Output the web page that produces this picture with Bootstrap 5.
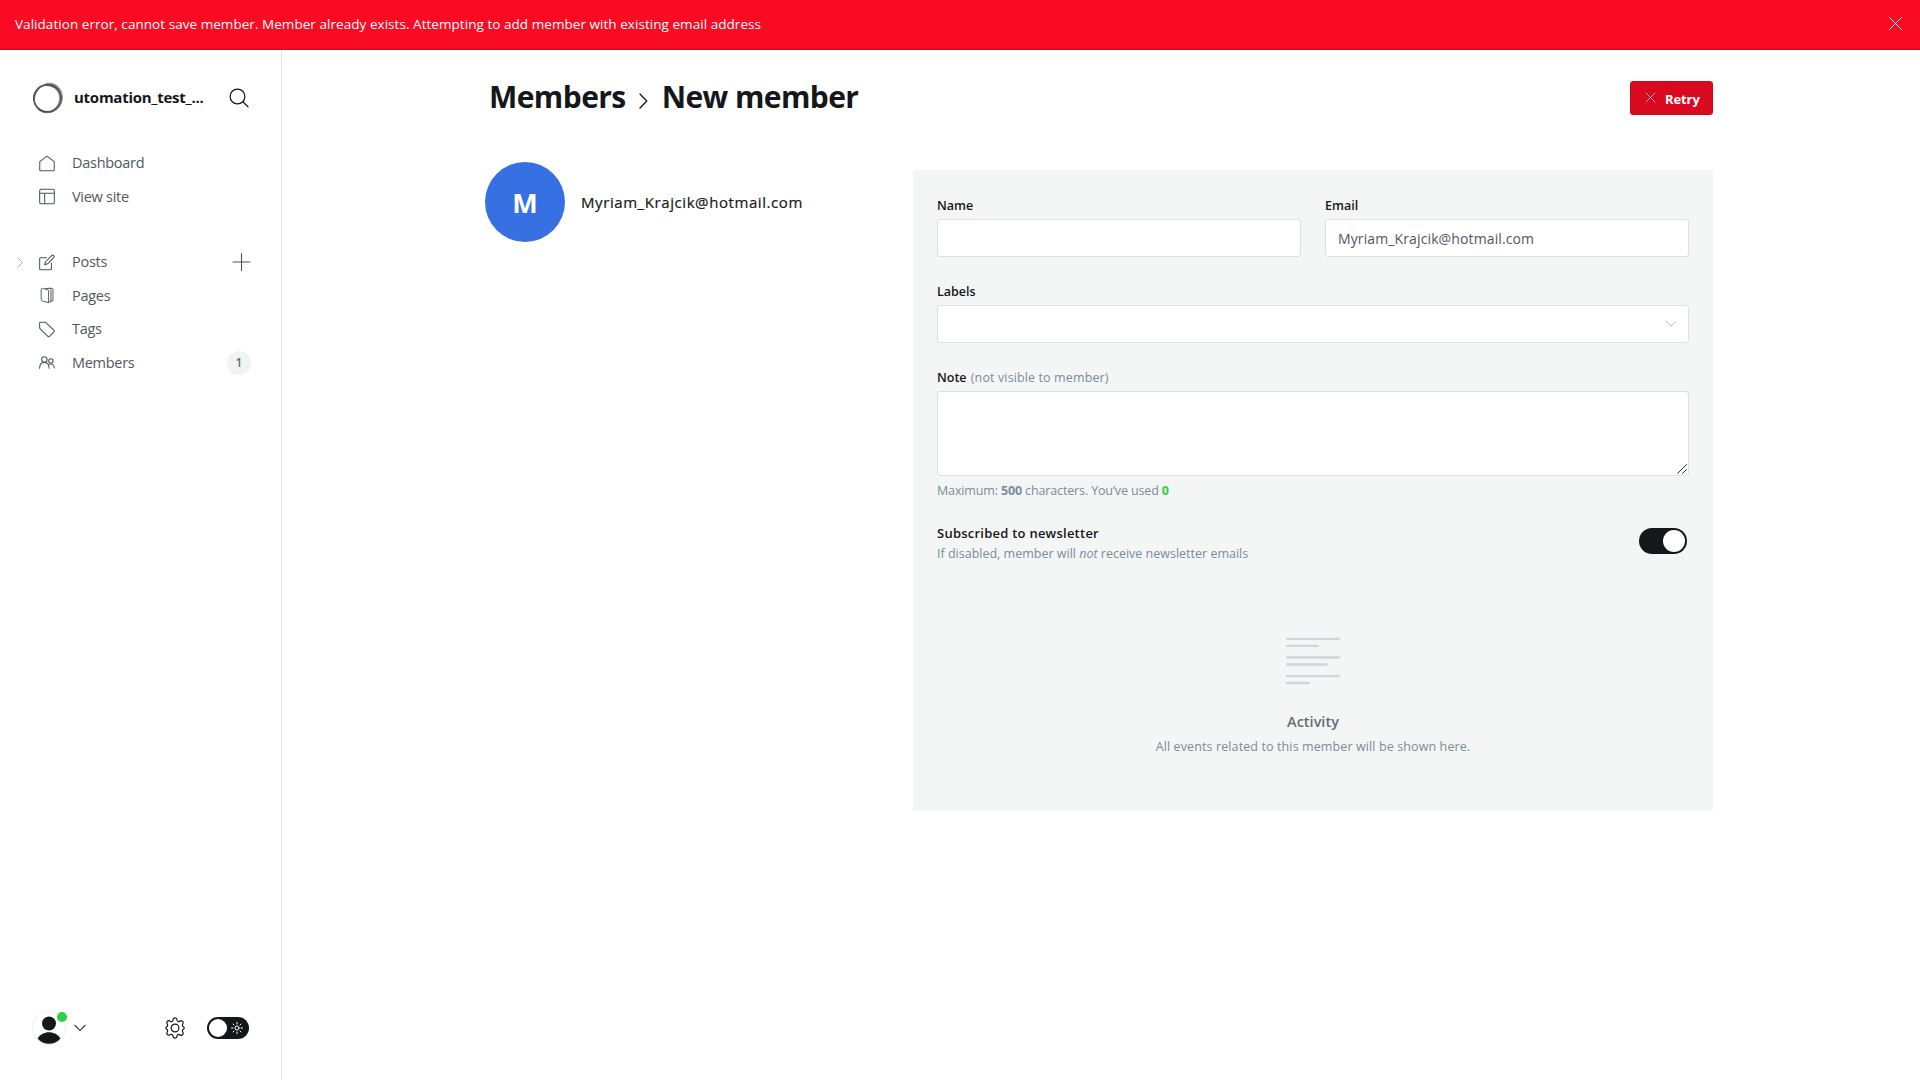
<!DOCTYPE html>
<html lang="en">
<head>
<meta charset="utf-8">
<title>New member</title>
<link href="https://cdn.jsdelivr.net/npm/bootstrap@5.3.0/dist/css/bootstrap.min.css" rel="stylesheet">
<style>
body{font-family:"Open Sans","Noto Sans",sans-serif;color:#15171a;height:1080px;overflow:hidden;font-size:14px;line-height:20px;background:#fff}
svg{display:block;fill:none;stroke:currentColor;stroke-linecap:round;stroke-linejoin:round;flex:none}
.alert-strip{height:50px;background:#f80b23;border-bottom:1px solid #c50a1e;color:#fff;padding:0 17px 2px 15px;font-weight:500;font-size:13.5px;letter-spacing:.048px}
.side{width:282px;border-right:1px solid #dfe1e3;padding:28px 0 30px}
.site-row{height:40px;padding:0 32px 0 32px}
.site-name{font-weight:700;font-size:15px;margin-left:10px;letter-spacing:-.26px;margin-top:-2px}
.nav-top{margin-top:28.5px}
.nav-second{margin-top:32px}
.menu-row{height:33.5px;padding:0 30px 0 39px;color:#4b5359;font-size:14.5px;position:relative}
.menu-row .lbl{margin-left:17px;letter-spacing:-.28px;color:#505960}
.caret{position:absolute;left:16px;top:11px;color:#abb4be}
.count{width:24px;height:24px;border-radius:50%;background:#f1f3f4;font-size:12px;font-weight:600;color:#626d79}
.foot{height:44px;padding:0 32px 0 32px}
.avatar-sm{position:relative;width:34px;height:34px}
.dot{position:absolute;left:25px;top:1px;width:10px;height:10px;border-radius:50%;background:#30cf43}
.mode{width:42px;height:22px;border-radius:11px;background:#15171a;padding:0 6px 0 2px;margin-left:21px;color:#fff}
.mode i{width:18px;height:18px;border-radius:50%;background:#fff}
.foot-chev{margin-left:8px}
.main-area{padding:31px 207px 0 203px}
.head-row{height:34px}
.head-row h1{font-size:30px;font-weight:700;line-height:34px;margin:0 0 2px;letter-spacing:-.58px}
.head-row h1.first{margin-left:4px}
.crumb{margin:5px 14px 0 13px}
.btn.retry{width:83px;height:34px;border-radius:3px;background:#d90a20;border:1px solid #c50a1e;color:#fff;font-size:13px;font-weight:700;padding:0;letter-spacing:-.1px}
.retry svg{margin:0 9px 1px 14px}
.retry span{margin-top:3px}
.content-row{margin-top:47px}
.big-avatar{width:80px;height:80px;border-radius:50%;background:#3770e2;color:#fff;font-size:27px;font-weight:700;padding-top:1px}
.who{font-size:15px;font-weight:500;margin-left:16px;letter-spacing:.58px;-webkit-text-stroke:.2px currentColor;padding-bottom:1px}
.panel{width:800px;height:641px;background:#f4f6f6;padding:25px 24px 0;margin-top:8px}
.cap{font-size:12.5px;font-weight:600;line-height:20px;display:block;padding-top:1px;margin-bottom:3px;color:#15171a}
.muted{color:#7c8b9a;font-weight:400}
.vis{letter-spacing:.12px;margin-left:1px}
.form-control.fld{height:38px;border:1px solid #dce0e3;border-radius:3px;padding:0 12px;font-size:14px;color:#4f575e;background:#fff;letter-spacing:.12px}
textarea.form-control.fld{height:85px;resize:none}
.note-box{position:relative}
.grip{position:absolute;right:2px;bottom:2px}
.grp{margin-bottom:24px}
.hint{font-size:12.5px;line-height:18px}
.limit{margin-top:6px;letter-spacing:-.14px}
.used{color:#30cf43}
.news{margin-top:22px}
.news-title{font-size:13px;font-weight:600;line-height:20px;letter-spacing:.24px;margin:1px 0 2px}
.toggle{width:48px;height:26px;border-radius:13px;background:#15171a;padding:2px;margin:0 2px 4px 0}
.toggle i{width:22px;height:22px;border-radius:50%;background:#fff}
.events{margin-top:74px}
.bars{color:#d0d5d9}
.ev-title{margin-top:26px;font-size:14.5px;font-weight:600;color:#626d79}
.ev-text{margin-top:6px;letter-spacing:.11px}
.chev{color:#b4bcc4}
</style>
<script src="https://cdn.jsdelivr.net/npm/bootstrap@5.3.0/dist/js/bootstrap.bundle.min.js"></script>
</head>
<body class="d-flex flex-column">
<div class="alert-strip d-flex align-items-center justify-content-between flex-shrink-0">
  <span>Validation error, cannot save member. Member already exists. Attempting to add member with existing email address</span>
  <svg width="15" height="15" viewBox="0 0 15 15" stroke-width=".9"><path d="M1.500 1.500l12 12M13.500 1.500l-12 12"/></svg>
</div>
<div class="d-flex flex-grow-1">
  <nav class="side d-flex flex-column flex-shrink-0">
    <div class="site-row d-flex align-items-center">
      <svg width="32" height="32" viewBox="0 0 32 32"><path d="M14 1.500C22-.5 30 5 30.500 15 30.500 23 25 30 17 30.500 24 27 28 22 27.500 15 27 8 21 3.500 14 3.500z" fill="#b0b0b0" stroke="#777" stroke-width=".7"/><ellipse cx="15.400" cy="16.300" rx="13.600" ry="13.500" stroke="#4a4a4a" stroke-width="1.700"/><ellipse cx="16" cy="16.500" rx="13" ry="14.600" stroke="#666" stroke-width=".9" transform="rotate(25 16 16)"/></svg>
      <span class="site-name">utomation_test_...</span>
      <svg class="ms-auto" width="20" height="20" viewBox="0 0 20 20" stroke-width="1.250"><circle cx="8.500" cy="8.500" r="7.400"/><path d="M13.800 13.800l5.200 5"/></svg>
    </div>
    <div class="menu-row nav-top d-flex align-items-center">
      <svg width="16" height="17" viewBox="0 0 17 17" stroke-width="1.100"><path d="M.8 6.600L8.500.6l7.700 6v8.700a1 1 0 0 1-1 1H1.800a1 1 0 0 1-1-1z"/></svg><span class="lbl">Dashboard</span>
    </div>
    <div class="menu-row d-flex align-items-center">
      <svg width="16" height="17" viewBox="0 0 17 17" stroke-width="1.100"><rect x=".7" y=".7" width="15.600" height="15.600" rx="1.800"/><path d="M.7 5h15.600M6 5v11"/></svg><span class="lbl">View site</span>
    </div>
    <div class="menu-row nav-second d-flex align-items-center">
      <svg class="caret" width="8" height="11" viewBox="0 0 8 11"><path d="M2 1l4.500 4.500L2 10"/></svg>
      <svg width="16" height="17" viewBox="0 0 17 17" stroke-width="1.100"><path d="M8 3.500H1.700a1 1 0 0 0-1 1v10.800a1 1 0 0 0 1 1h10.500a1 1 0 0 0 1-1V9M6 11l1-3.300L13.700 1c1.200-1 3.200.7 2.100 2.100L9.200 9.900z"/></svg><span class="lbl">Posts</span>
      <svg class="ms-auto plus" width="20" height="20" viewBox="0 0 20 20" stroke-width="1.100"><path d="M10.500 1.500v17M2 10h17"/></svg>
    </div>
    <div class="menu-row d-flex align-items-center">
      <svg width="16" height="17" viewBox="0 0 17 17" stroke-width="1"><path d="M2.300 1.800a1 1 0 0 1 1.200-.9l5.800 1.500a1.200 1.200 0 0 1 .9 1.200v12.500l-6.400-1.700a2 2 0 0 1-1.500-1.900zM7 1h4l1.200.6a1 1 0 0 1 .5.900v12.300l-2.300.8M10.800.8h3a1 1 0 0 1 1 1v12.500h-2"/></svg><span class="lbl">Pages</span>
    </div>
    <div class="menu-row d-flex align-items-center">
      <svg width="16" height="17" viewBox="0 0 17 17" stroke-width="1.100"><path d="M.7 1.700a1 1 0 0 1 1-1h5l9.300 8.700a1 1 0 0 1 0 1.300L11 16a1 1 0 0 1-1.300 0L1 7.600a1 1 0 0 1-.3-.8z"/></svg><span class="lbl">Tags</span>
    </div>
    <div class="menu-row d-flex align-items-center">
      <svg width="16" height="17" viewBox="0 0 17 17" stroke-width="1.100"><circle cx="5.700" cy="5.300" r="2.900"/><path d="M.6 14.500c.3-8.200 9.900-8.200 10.200 0"/><circle cx="12.600" cy="6.800" r="2.300"/><path d="M11.400 10.300c2.700-.6 4.700 1.200 4.900 4"/></svg><span class="lbl">Members</span>
      <span class="count ms-auto d-flex align-items-center justify-content-center">1</span>
    </div>
    <div class="foot d-flex align-items-center mt-auto">
      <div class="avatar-sm"><svg width="34" height="34" viewBox="0 0 34 34"><circle cx="17" cy="17" r="16.500" stroke="#edf0f2"/><g stroke="none" fill="#15171a"><circle cx="17" cy="12.500" r="7"/><path d="M5.500 27.500c5-8.500 18-8.500 23 0-5.500 7-17.500 7-23 0z"/></g></svg><span class="dot"></span></div>
      <svg class="foot-chev" width="12" height="8" viewBox="0 0 12 8" stroke-width="1.050"><path d="M.8 1.200L6 6.500l5.200-5.300"/></svg>
      <svg class="ms-auto" width="22" height="22" viewBox="0 0 22 22" stroke-width="1.200"><circle cx="11" cy="11" r="3.900"/><path d="M9.200 2.200a1.900 1.900 0 0 1 3.600 0l.3 1.200a1.800 1.800 0 0 0 2.500 1l1-.5A1.900 1.900 0 0 1 19 6.400l-.5 1.100a1.800 1.800 0 0 0 1 2.400 1.300 1.300 0 0 1 0 2.300 1.800 1.800 0 0 0-1 2.400l.5 1a1.900 1.900 0 0 1-2.500 2.500l-1-.5a1.800 1.800 0 0 0-2.400 1l-.3 1.200a1.900 1.900 0 0 1-3.600 0l-.3-1.300a1.800 1.800 0 0 0-2.500-1l-1 .6A1.900 1.900 0 0 1 3 15.600l.5-1.100a1.800 1.800 0 0 0-1-2.400 1.300 1.300 0 0 1 0-2.200 1.800 1.800 0 0 0 1-2.400l-.5-1A1.900 1.900 0 0 1 5.500 3.900l1 .6a1.800 1.800 0 0 0 2.400-1z"/></svg>
      <div class="mode d-flex align-items-center justify-content-between"><i></i><svg width="12" height="12" viewBox="0 0 12 12"><circle cx="6" cy="6" r="2"/><path d="M6 .5v1.500M6 10v1.500M.5 6H2M10 6h1.500M2 2l1 1M9 9l1 1M2 10l1-1M9 3l1-1"/></svg></div>
    </div>
  </nav>
  <main class="main-area flex-grow-1">
    <div class="head-row d-flex align-items-center">
      <h1 class="first">Members</h1>
      <svg class="crumb" width="9" height="16" viewBox="0 0 9 16" stroke-width="1.300"><path d="M1 1l6.800 7L1 15"/></svg>
      <h1>New member</h1>
      <button class="btn retry ms-auto d-flex align-items-center"><svg width="11" height="11" viewBox="0 0 11 11" stroke-width=".7"><path d="M1 1l9 9M10 1l-9 9"/></svg><span>Retry</span></button>
    </div>
    <div class="content-row d-flex justify-content-between align-items-start">
      <div class="d-flex align-items-center">
        <div class="big-avatar d-flex align-items-center justify-content-center">M</div>
        <span class="who">Myriam_Krajcik@hotmail.com</span>
      </div>
      <section class="panel">
        <div class="d-flex gap-4 grp">
          <div class="flex-fill w-50"><label class="cap">Name</label><input class="form-control fld"></div>
          <div class="flex-fill w-50"><label class="cap">Email</label><input class="form-control fld" value="Myriam_Krajcik@hotmail.com"></div>
        </div>
        <div class="grp"><label class="cap">Labels</label>
          <div class="form-control fld d-flex align-items-center justify-content-end"><svg class="chev" width="10" height="6" viewBox="0 0 10 6"><path d="M.5.500L5 5 9.500.500"/></svg></div></div>
        <div><label class="cap">Note <span class="muted vis">(not visible to member)</span></label>
          <div class="note-box"><textarea class="form-control fld d-block"></textarea><svg class="grip" width="10" height="10" viewBox="0 0 10 10" stroke="#555" stroke-width=".9"><path d="M.5 9.500l9-9M5.500 9.500l4-4"/></svg></div></div>
        <div class="hint muted limit">Maximum: <b>500</b> characters. You’ve used <b class="used">0</b></div>
        <div class="news d-flex justify-content-between align-items-center">
          <div><div class="news-title">Subscribed to newsletter</div><div class="hint muted">If disabled, member will <em>not</em> receive newsletter emails</div></div>
          <div class="toggle d-flex justify-content-end"><i></i></div>
        </div>
        <div class="events d-flex flex-column align-items-center">
          <svg class="bars" width="54" height="49" viewBox="0 0 54 49" stroke-width="2.300"><path d="M1.200 1.800h51.600M1.200 8.800h30.500M1.200 20.500h51.600M1.200 27.500h39.700M1.200 39.200h51.600M1.200 46h21.500"/></svg>
          <div class="ev-title">Activity</div>
          <div class="hint muted ev-text">All events related to this member will be shown here.</div>
        </div>
      </section>
    </div>
  </main>
</div>
</body>
</html>
